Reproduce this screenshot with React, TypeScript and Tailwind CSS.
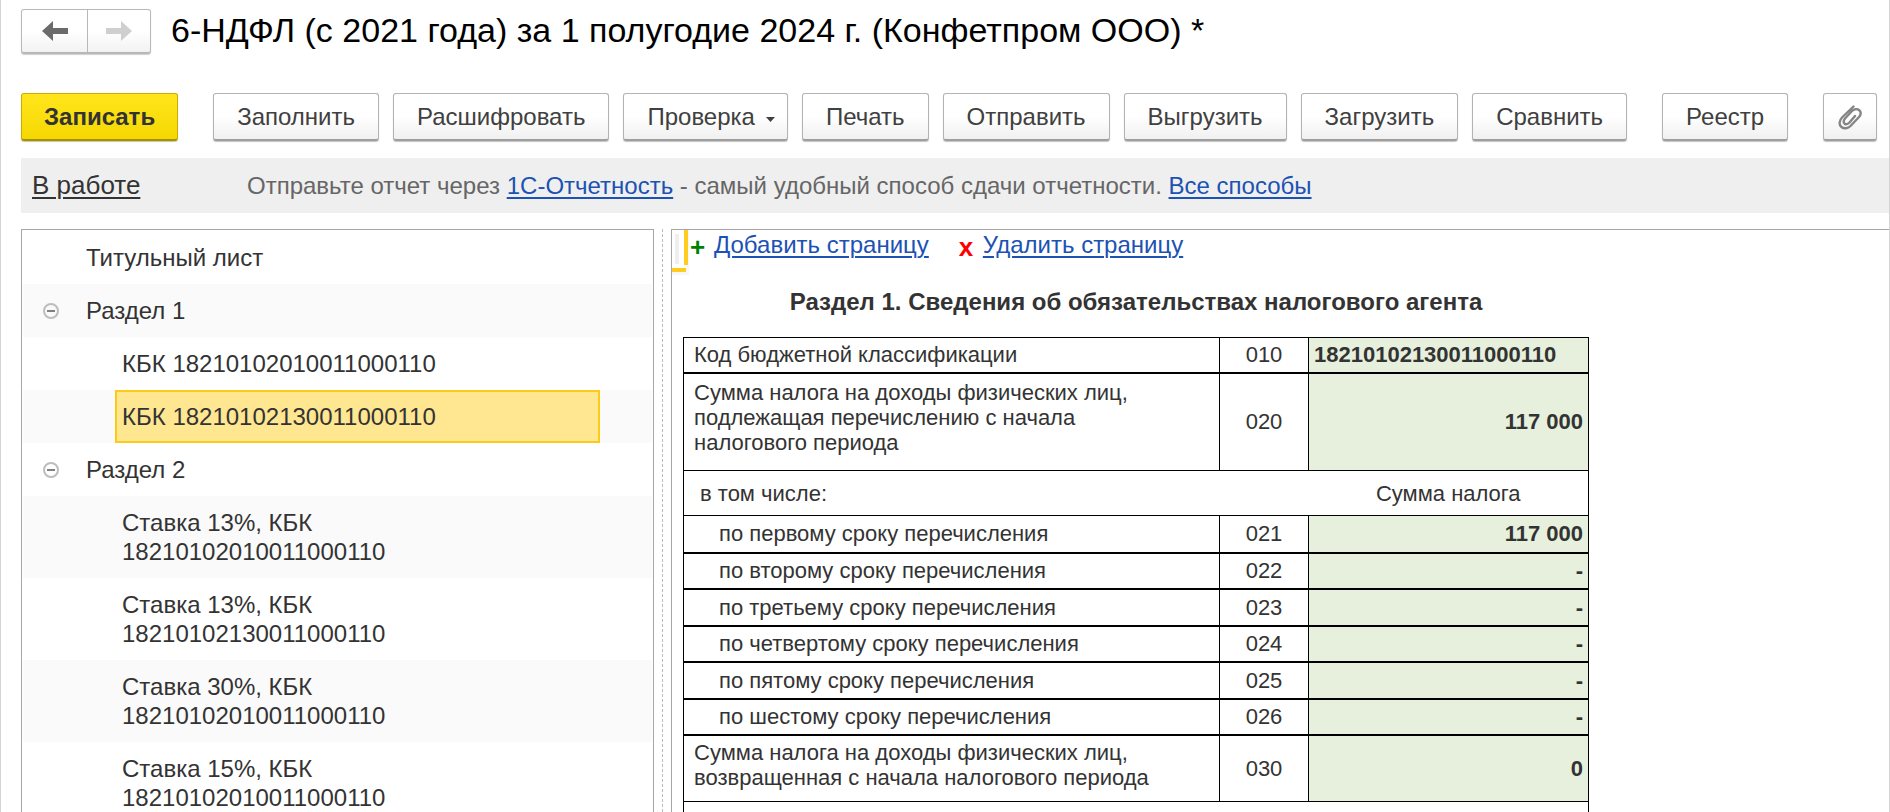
import type { ReactNode } from "react";

const CMD =
  "flex h-12 items-center rounded-[3px] border border-[#b3b3b3] border-b-2 border-b-[#9e9e9e] bg-linear-to-b from-white from-50% to-[#f0f0f0] text-[#404040] shadow-[0_1px_1px_#c4c4c4]";

const LINK = "text-[#1c52b3] underline decoration-2 underline-offset-[3px]";

const TREE = [
  { label: "Титульный лист", level: 0 },
  { label: "Раздел 1", level: 0, group: true },
  { label: "КБК 18210102010011000110", level: 1 },
  { label: "КБК 18210102130011000110", level: 1, selected: true },
  { label: "Раздел 2", level: 0, group: true },
  { label: "Ставка 13%, КБК 18210102010011000110", level: 1 },
  { label: "Ставка 13%, КБК 18210102130011000110", level: 1 },
  { label: "Ставка 30%, КБК 18210102010011000110", level: 1 },
  { label: "Ставка 15%, КБК 18210102010011000110", level: 1 },
];

const TERMS = [
  { label: "по первому сроку перечисления", code: "021", value: "117 000" },
  { label: "по второму сроку перечисления", code: "022", value: "-" },
  { label: "по третьему сроку перечисления", code: "023", value: "-" },
  { label: "по четвертому сроку перечисления", code: "024", value: "-" },
  { label: "по пятому сроку перечисления", code: "025", value: "-" },
  { label: "по шестому сроку перечисления", code: "026", value: "-" },
];

function Cmd({ children }: { children: ReactNode }) {
  return (
    <button type="button" className={`${CMD} px-[23px]`}>
      {children}
    </button>
  );
}

function Arrow({ flip }: { flip?: boolean }) {
  return (
    <svg viewBox="0 0 26 20" className={flip ? "w-[26px] rotate-180" : "w-[26px]"} fill="currentColor" aria-hidden="true">
      <path d="M0 10 11 0V7H26V13H11V20Z" />
    </svg>
  );
}

function Header() {
  return (
    <header className="flex items-start gap-[20px] pt-[9px] pl-[20px]">
      <div className="flex h-[45px] rounded-[3px] border border-[#b8b8b8] border-b-2 bg-linear-to-b from-white from-50% to-[#f2f2f2] shadow-[0_1px_1px_#d0d0d0]">
        <button type="button" aria-label="Назад" className="flex w-[66px] items-center justify-center border-r border-[#b8b8b8] text-[#6b6b6b]">
          <Arrow />
        </button>
        <button type="button" aria-label="Вперед" className="flex w-[62px] items-center justify-center text-[#cfcfcf]">
          <Arrow flip />
        </button>
      </div>
      <h1 className="text-[34px] leading-[42px] whitespace-nowrap text-black">
        6-НДФЛ (с 2021 года) за 1 полугодие 2024 г. (Конфетпром ООО) *
      </h1>
    </header>
  );
}

function Toolbar() {
  return (
    <div className="flex gap-[35px] pt-[39px] pl-[20px] whitespace-nowrap">
      <button
        type="button"
        className="flex h-12 items-center rounded-[3px] border border-[#c9ad00] border-b-2 border-b-[#a89100] bg-linear-to-b from-[#ffe51a] to-[#f5d800] px-[22px] font-bold text-[#333] shadow-[0_1px_1px_#c4c4c4]"
      >
        Записать
      </button>
      <div className="flex gap-[14px]">
        <Cmd>Заполнить</Cmd>
        <Cmd>Расшифровать</Cmd>
        <button type="button" className={`${CMD} pr-[12px] pl-[23px]`}>
          Проверка
          <svg viewBox="0 0 9 5" className="mt-[5px] ml-[11px] w-[9px]" fill="#404040" aria-hidden="true">
            <path d="M0 0H9L4.500 5Z" />
          </svg>
        </button>
        <Cmd>Печать</Cmd>
        <Cmd>Отправить</Cmd>
        <Cmd>Выгрузить</Cmd>
        <Cmd>Загрузить</Cmd>
        <Cmd>Сравнить</Cmd>
      </div>
      <Cmd>Реестр</Cmd>
      <button type="button" aria-label="Присоединенные файлы" className={`${CMD} px-[14px]`}>
        <svg viewBox="0 0 24 26" className="w-[24px]" fill="none" strokeLinecap="round" strokeLinejoin="round" aria-hidden="true">
          <path
            d="M15.500 2.500 4.500 13C0.500 17 1 21 3.500 23C6 25 10 24.500 12.500 22L21 13C23.500 10 23 7.500 21 6C19 4.500 16 5 14 7L7 14.500C5 17 5.500 19 7 20C8.500 20.500 10 20 11.500 18.500L17 12"
            stroke="#858585"
            strokeWidth="2.400"
          />
        </svg>
      </button>
    </div>
  );
}

function StatusBar() {
  return (
    <div className="mt-[17px] ml-[20px] flex h-[55px] items-center bg-[#efefef] pl-[11px] whitespace-nowrap">
      <a href="#status" className="w-[215px] text-[26px] text-[#333] underline decoration-2 underline-offset-[3px]">
        В работе
      </a>
      <p className="text-[#666]">
        Отправьте отчет через{" "}
        <a href="#report" className={LINK}>
          1С-Отчетность
        </a>{" "}
        - самый удобный способ сдачи отчетности.{" "}
        <a href="#ways" className={LINK}>
          Все способы
        </a>
      </p>
    </div>
  );
}

function Tree() {
  return (
    <nav className="w-[633px] shrink-0 overflow-hidden border border-b-0 border-[#a6a6a6] px-px pt-px">
      <ul>
        {TREE.map((item, i) => (
          <li key={i} className="flex min-h-[53px] items-stretch odd:bg-white even:bg-[#fafafa]">
            <div className="flex w-[63px] shrink-0 items-center pl-[20px]">
              {item.group && (
                <button type="button" aria-label={`Свернуть ${item.label}`}>
                  <svg viewBox="0 0 16 16" className="size-4" fill="none" aria-hidden="true">
                    <circle cx="8" cy="8" r="7" stroke="#bdbdbd" strokeWidth="2" />
                    <path d="M4 8H12" stroke="#808080" strokeWidth="2" />
                  </svg>
                </button>
              )}
            </div>
            {item.level === 0 ? (
              <span className="flex items-center">{item.label}</span>
            ) : (
              <a
                href="#page"
                className={
                  item.selected
                    ? "ml-[29px] flex w-[485px] items-center border-2 border-[#fccb17] bg-[#ffe691] pl-[5px]"
                    : "ml-[29px] flex w-[345px] items-center py-[12px] pl-[7px]"
                }
              >
                {item.label}
              </a>
            )}
          </li>
        ))}
      </ul>
    </nav>
  );
}

const LABEL = "border border-black pl-[10px] text-left font-normal";
const CODE = "border border-black text-center";
const VALUE = "border border-black bg-[#e6f0dc] pr-[5px] text-right font-bold";

function CellCursor() {
  return (
    <div className="absolute top-0 left-0 h-[45px] w-[17px] bg-[#f7f7f7]" aria-hidden="true">
      <div className="absolute top-0 left-0 h-[42px] w-[14px] border-b-4 border-[#ffcc1f] bg-white" />
      <div className="absolute top-[4px] left-[3px] h-[30px] w-1 bg-[#efefef]" />
      <div className="absolute top-0 left-[12px] h-[35px] w-1 bg-[#ffcc1f]" />
    </div>
  );
}

function Report() {
  return (
    <section className="relative ml-[8px] min-w-0 flex-1 overflow-hidden border-t border-l border-[#a6a6a6]">
      <CellCursor />
      <div className="flex h-[28px] items-center pl-[18px] whitespace-nowrap">
        <span className="w-[24px] pt-[7px] text-[26px] font-bold text-[#008000]">+</span>
        <a href="#add" className={`${LINK} mr-[30px]`}>
          Добавить страницу
        </a>
        <span className="w-[24px] pt-[7px] text-[26px] font-bold text-[#f00]">x</span>
        <a href="#delete" className={LINK}>
          Удалить страницу
        </a>
      </div>
      <div className="ml-[11px] w-[906px]">
        <h2 className="pt-[29px] pb-[20px] text-center leading-[30px] font-bold">
          Раздел 1. Сведения об обязательствах налогового агента
        </h2>
        <table className="w-full table-fixed border-collapse text-[22px] leading-[25px]">
          <colgroup>
            <col />
            <col className="w-[89px]" />
            <col className="w-[280px]" />
          </colgroup>
          <tbody>
            <tr className="h-[35px]">
              <th scope="row" className={LABEL}>Код бюджетной классификации</th>
              <td className={CODE}>010</td>
              <td className="border border-black bg-[#e6f0dc] pl-[5px] font-bold">18210102130011000110</td>
            </tr>
            <tr className="h-[98px] border-t-2 border-black">
              <th scope="row" className={LABEL}>
                <span className="block w-[440px] pb-[8px]">
                  Сумма налога на доходы физических лиц, подлежащая перечислению с начала налогового периода
                </span>
              </th>
              <td className={CODE}>020</td>
              <td className={VALUE}>117 000</td>
            </tr>
            <tr className="h-[45px]">
              <th scope="row" colSpan={2} className="border-y border-l border-black pl-[16px] text-left font-normal">
                в том числе:
              </th>
              <td className="border-y border-r border-black text-center">Сумма налога</td>
            </tr>
            {TERMS.map((t) => (
              <tr key={t.code} className="h-[37px] border-b-2 border-black odd:h-[36px]">
                <th scope="row" className="border-x border-black pl-[35px] text-left font-normal">{t.label}</th>
                <td className="border-x border-black text-center">{t.code}</td>
                <td className="border-x border-black bg-[#e6f0dc] pr-[5px] text-right font-bold">{t.value}</td>
              </tr>
            ))}
            <tr className="h-[67px]">
              <th scope="row" className={LABEL}>
                <span className="block w-[480px] pb-[7px]">
                  Сумма налога на доходы физических лиц, возвращенная с начала налогового периода
                </span>
              </th>
              <td className={CODE}>030</td>
              <td className={VALUE}>0</td>
            </tr>
            <tr className="h-[40px]">
              <td colSpan={3} className="border-x border-black" />
            </tr>
          </tbody>
        </table>
      </div>
    </section>
  );
}

export default function App() {
  return (
    <div className="flex h-screen flex-col overflow-hidden border-x border-[#d4d4d4] bg-white font-['Liberation_Sans',Arial,sans-serif] text-[24px] leading-[29px] text-[#333]">
      <Header />
      <Toolbar />
      <StatusBar />
      <main className="mt-[16px] flex min-h-0 flex-1">
        <div className="w-[20px] shrink-0" />
        <Tree />
        <div className="ml-[8px] border-l border-dashed border-[#bbb]" />
        <Report />
      </main>
    </div>
  );
}
